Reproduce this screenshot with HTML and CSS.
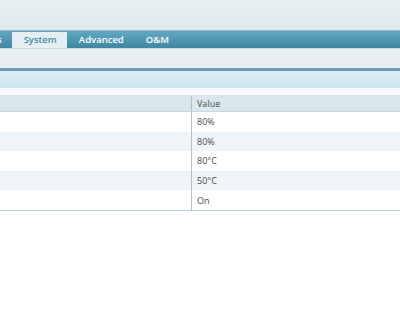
FILE: index.html
```html
<!DOCTYPE html>
<html lang="en">
<head>
    <meta charset="UTF-8">
    <title>System</title>
    <link rel="stylesheet" href="styles.css">
</head>
<body>
    <div class="top"></div>
    <div class="tabs">
        <ul>
            <li class="cut">s</li>
            <li class="active">System</li>
            <li>Advanced</li>
            <li>O&amp;M</li>
        </ul>
    </div>
    <div class="subbar"></div>
    <div class="section-title"></div>
    <div class="gap"></div>

    <table>
        <thead>
            <tr>
                <th class="name"></th>
                <th>Value</th>
            </tr>
        </thead>
        <tbody>
            <tr><td class="name"></td><td>80%</td></tr>
            <tr><td class="name"></td><td>80%</td></tr>
            <tr><td class="name"></td><td>80&deg;C</td></tr>
            <tr><td class="name"></td><td>50&deg;C</td></tr>
            <tr><td class="name"></td><td>On</td></tr>
        </tbody>
    </table>
</body>
</html>
```

FILE: styles.css
```css
body {
    margin: 0;
    background: #fff;
    font-family: "Open Sans", sans-serif;
    font-size: 9px;
    color: #4a4a4a;
    overflow: hidden;
}
.top {
    height: 30px;
    background: linear-gradient(#eaf1f4, #dfe8ed);
}
.tabs {
    height: 17px;
    background: linear-gradient(#63a9c2, #3f86a1);
    border-top: 1px solid #8fbdcd;
    overflow: hidden;
}
.tabs ul {
    list-style: none;
    margin: 0;
    padding: 0;
    display: flex;
    height: 100%;
}
.tabs li {
    padding: 0 10px 0 12px;
    color: #fff;
    font-size: 9.5px;
    font-weight: 600;
    line-height: 16px;
    margin-top: 1px;
}
.tabs li.cut {
    padding: 0 10px 0 0;
    margin-left: -3px;
}
.tabs li.active {
    background: #e5eef2;
    color: #4b89a5;
}
.subbar {
    height: 19px;
    background: #e8eef1;
    border-top: 1px solid #c9dce4;
}
.section-title {
    height: 17px;
    border-top: 3px solid #6e9fb2;
    background: linear-gradient(#d9ecf2, #cfe5ec);
}
.gap {
    height: 7px;
    background: #f7fbfc;
    border-bottom: 1px solid #dde6ea;
}
table {
    width: 100%;
    border-collapse: collapse;
    border-bottom: 1px solid #b9ced8;
}
th, td {
    text-align: left;
    padding: 0 0 0 5px;
    font-weight: normal;
    height: 19.6px;
}
th {
    height: 15px;
    background: #dae8ee;
    border-bottom: 1px solid #c5d8e0;
}
th.name, td.name {
    width: 191px;
    border-right: 1px solid #a9c3cf;
    padding: 0;
}
tbody tr:nth-child(even) {
    background: #eef4f7;
}
```
